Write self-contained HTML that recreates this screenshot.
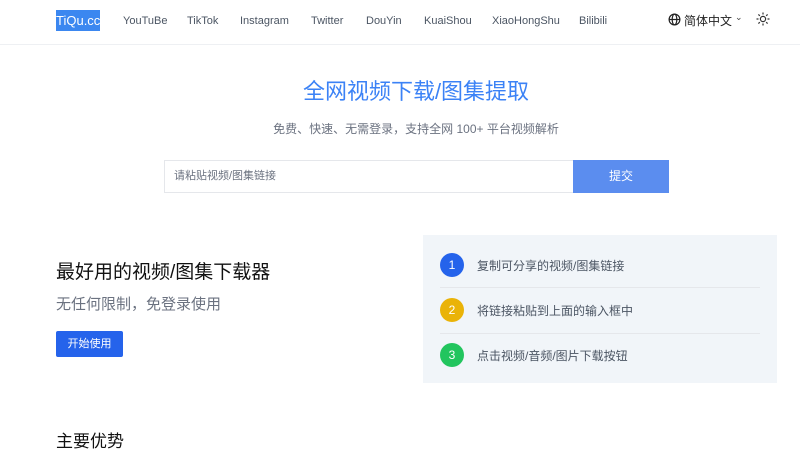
<!DOCTYPE html>
<html><head><meta charset="utf-8"><style>
*{margin:0;padding:0;box-sizing:border-box}
body{width:800px;height:436px;overflow:hidden;background:#fff;font-family:"Liberation Sans","Noto Sans CJK SC",sans-serif;position:relative}
.a{position:absolute;white-space:nowrap}
.nav{font-size:11px;color:#4b5563;top:15px}
.c{width:24px;height:24px;border-radius:50%;color:#fff;font-size:12px;text-align:center;line-height:24px;left:440px}
.st{left:477px;font-size:12px;color:#4b5563}
</style></head><body>
<div class="a" style="left:0;top:44px;width:800px;height:1px;background:#eef0f3"></div>
<div class="a" style="left:56px;top:10px;width:44px;height:21px;background:#3b87f0;color:#fff;font-size:13px;line-height:21px;">TiQu.cc</div>
<div class="a nav" style="left:123px">YouTuBe</div>
<div class="a nav" style="left:187px">TikTok</div>
<div class="a nav" style="left:240px">Instagram</div>
<div class="a nav" style="left:311px">Twitter</div>
<div class="a nav" style="left:366px">DouYin</div>
<div class="a nav" style="left:424px">KuaiShou</div>
<div class="a nav" style="left:492px">XiaoHongShu</div>
<div class="a nav" style="left:579px">Bilibili</div>
<svg class="a" style="left:668px;top:13px" width="13" height="13" viewBox="0 0 14 14" fill="none" stroke="#222" stroke-width="1.3"><circle cx="7" cy="7" r="5.8"/><ellipse cx="7" cy="7" rx="2.5" ry="5.8"/><path d="M1.2 7h11.6"/></svg>
<div class="a" style="left:684px;top:12px;font-size:12px;color:#222">简体中文</div>
<div class="a" style="left:735px;top:12px;font-size:9px;color:#444">⌄</div>
<svg class="a" style="left:756px;top:12px" width="14" height="14" viewBox="0 0 14 14" fill="none" stroke="#333" stroke-width="1.2"><circle cx="7" cy="7" r="2.6"/><path d="M7 0.5v2M7 11.5v2M0.5 7h2M11.5 7h2M2.4 2.4l1.4 1.4M10.2 10.2l1.4 1.4M2.4 11.6l1.4-1.4M10.2 3.8l1.4-1.4"/></svg>
<div class="a" style="left:0;width:832px;text-align:center;top:74px;font-size:22px;color:#3b82f6">全网视频下载/图集提取</div>
<div class="a" style="left:0;width:832px;text-align:center;top:120px;font-size:12px;color:#6b7280">免费、快速、无需登录，支持全网 100+ 平台视频解析</div>
<div class="a" style="left:164px;top:160px;width:410px;height:33px;border:1px solid #e5e7eb;border-right:none;font-size:11px;color:#6b7280;line-height:31px;padding-left:9px">请粘贴视频/图集链接</div>
<div class="a" style="left:573px;top:160px;width:96px;height:33px;background:#5b8def;color:#fff;font-size:12px;text-align:center;line-height:33px">提交</div>
<div class="a" style="left:56px;top:257px;font-size:19px;color:#111">最好用的视频/图集下载器</div>
<div class="a" style="left:56px;top:293px;font-size:15px;color:#6b7280">无任何限制，免登录使用</div>
<div class="a" style="left:56px;top:331px;width:67px;height:26px;background:#2563eb;border-radius:2px;color:#fff;font-size:11px;text-align:center;line-height:26px">开始使用</div>
<div class="a" style="left:56px;top:427px;font-size:17px;color:#111">主要优势</div>
<div class="a" style="left:423px;top:235px;width:354px;height:148px;background:#f1f5f9"></div>
<div class="a" style="left:440px;top:287px;width:320px;height:1px;background:#e5e7eb"></div>
<div class="a" style="left:440px;top:333px;width:320px;height:1px;background:#e5e7eb"></div>
<div class="a c" style="top:253px;background:#2563eb">1</div>
<div class="a c" style="top:298px;background:#eab308">2</div>
<div class="a c" style="top:343px;background:#22c55e">3</div>
<div class="a st" style="top:257px">复制可分享的视频/图集链接</div>
<div class="a st" style="top:302px">将链接粘贴到上面的输入框中</div>
<div class="a st" style="top:347px">点击视频/音频/图片下载按钮</div>
</body></html>
